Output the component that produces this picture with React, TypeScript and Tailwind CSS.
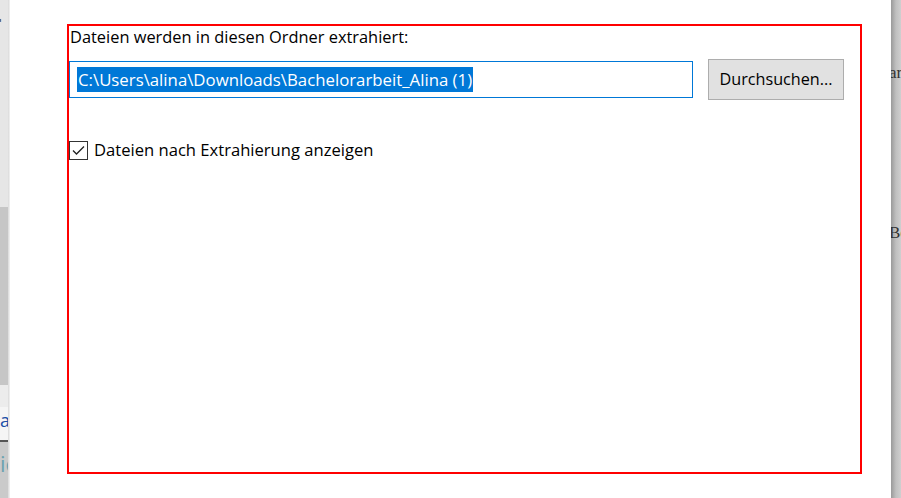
export default function App() {
  return (
    <div className="flex h-[498px] w-[901px] overflow-hidden bg-white font-['Open_Sans',sans-serif]">
      {/* left background strip */}
      <div className="flex w-[8px] flex-col">
        <div className="relative h-[207px] bg-[#e6e6e6]">
          <span className="absolute left-[-3px] top-[14px] text-[12px] leading-none text-[#555]">▪</span>
        </div>
        <div className="h-[178px] bg-[#c6c6c6]" />
        <div className="relative h-[22px] bg-[#ececec]">
          <span className="absolute left-[-4px] top-[2px] text-[12px] text-[#555]">,</span>
        </div>
        <div className="h-[33px] overflow-hidden bg-[#f5f5f5] pt-[4px] text-[18px] leading-none text-[#1a4fa8]">a</div>
        <div className="h-[2px] bg-[#555]" />
        <div className="flex-1 overflow-hidden bg-[#cacaca] pt-[10px] text-[22px] leading-none text-[#6aa2b0]">ic</div>
      </div>
      <div className="w-[2px] bg-gradient-to-r from-[#d8d8d8] to-[#f4f4f4]" />

      {/* dialog */}
      <div className="flex-1 bg-white pl-[57px] pt-[24px]">
        <div className="h-[450px] w-[795px] border-2 border-[#ff0000]">
          <div className="pl-[1px] pt-[1px] text-[16.4px] leading-[20px] text-black">
            Dateien werden in diesen Ordner extrahiert:
          </div>
          <div className="mt-[12px] flex items-center gap-[15px]">
            <div className="flex h-[37px] w-[624px] items-center border border-[#0078d7] bg-white pl-[7px]">
              <span className="bg-[#0078d7] px-[1px] text-[16.8px] leading-[25px] text-white">
                C:\Users\alina\Downloads\Bachelorarbeit_Alina (1)
              </span>
            </div>
            <button className="h-[41px] w-[136px] border border-[#adadad] bg-[#e1e1e1] text-[16.2px] text-black">
              Durchsuchen...
            </button>
          </div>
          <label className="mt-[40px] flex items-center gap-[6px]">
            <span className="flex h-[19px] w-[19px] items-center justify-center border border-[#333] bg-white">
              <svg width="13" height="11" viewBox="0 0 13 11" fill="none">
                <path d="M1 5.5 L4.5 9 L12 1.5" stroke="#222" strokeWidth="1.3" />
              </svg>
            </span>
            <span className="text-[16.6px] leading-[20px] text-black">Dateien nach Extrahierung anzeigen</span>
          </label>
        </div>
      </div>

      {/* right background strip */}
      <div className="flex w-[10px] flex-col overflow-hidden bg-gradient-to-r from-[#9a9a9a] via-[#c0c0c0] to-[#cfcfcf] font-['Liberation_Serif',serif] text-[17px] leading-none text-[#333]">
        <span className="mt-[64px] -ml-[2px]">ar</span>
        <span className="mt-[143px] -ml-[2px]">Bo</span>
      </div>
    </div>
  )
}
